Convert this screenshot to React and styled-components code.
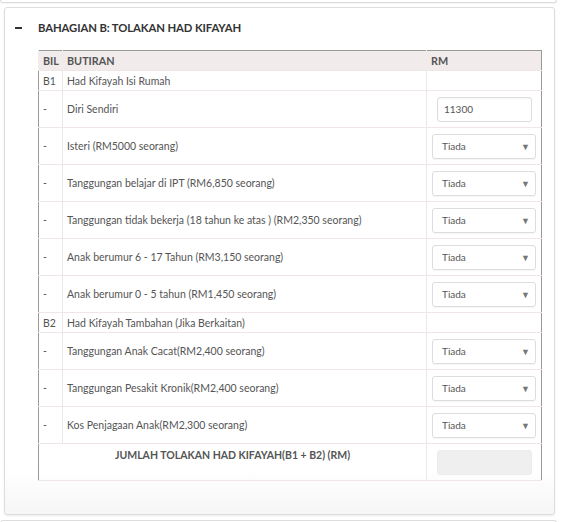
import React from "react";
import styled, { createGlobalStyle } from "styled-components";

const Global = createGlobalStyle`
  html, body { margin: 0; padding: 0; background: #fff; }
  body { font-family: Lato, "Open Sans", sans-serif; color: #555; }
  * { box-sizing: border-box; }
`;

const Page = styled.div`
  width: 563px;
  height: 522px;
  overflow: hidden;
  display: flex;
  flex-direction: column;
`;

const PrevPanel = styled.div`
  height: 3px;
  width: 557px;
  border: 1px solid #ddd;
  border-top: none;
  border-radius: 0 0 3px 3px;
  box-shadow: 0 1px 1px rgba(0,0,0,0.05);
  flex: none;
`;

const Panel = styled.section`
  margin: 4px 8px 0 4px;
  height: 508px;
  border: 1px solid #ddd;
  border-radius: 3px;
  background: linear-gradient(to bottom, #fff 0%, #fff 91%, #f6f6f6 100%);
  box-shadow: 0 1px 2px rgba(0,0,0,0.08);
  flex: none;
  display: flex;
  flex-direction: column;
`;

const NextPanel = styled.div`
  margin-top: 5px;
  height: 4px;
  width: 557px;
  border: 1px solid #ddd;
  border-bottom: none;
  border-radius: 3px 3px 0 0;
  flex: none;
`;

const Header = styled.div`
  display: flex;
  align-items: center;
  height: 36px;
  padding: 3px 0 0 10px;
  gap: 16px;
`;

const Toggle = styled.span`
  width: 7px;
  height: 2px;
  background: #333;
`;

const Title = styled.h3`
  margin: 0;
  font-size: 11.3px;
  font-weight: 700;
  color: #333;
  letter-spacing: -0.1px;
`;

const Body = styled.div`
  padding: 6px 0 0 33px;
`;

const Table = styled.table`
  width: 503px;
  border-collapse: collapse;
  border: 1px solid #999;
  table-layout: fixed;
  font-size: 10.5px;
  color: #555;
`;

const Th = styled.th`
  background: #f1ebeb;
  font-weight: 700;
  text-align: left;
  height: 20px;
  padding: 0 4px;
  border-left: 1px solid #f1ebeb;
  font-size: 10.8px;
  color: #555;
`;

const Td = styled.td`
  border: 1px solid #efe7e7;
  padding: 0 4px;
  height: ${p => (p.$tall ? "37px" : "20px")};
  vertical-align: ${p => (p.$top ? "top" : "middle")};
  text-align: ${p => (p.$center ? "center" : "left")};
  font-weight: ${p => (p.$bold ? 700 : 400)};
  padding-top: ${p => (p.$top ? "5px" : "0")};
  &:first-child { border-left: none; }
  &:last-child { border-right: none; }
`;

const ValueCell = styled.td`
  border: 1px solid #efe7e7;
  border-right: none;
  padding: 0 5px 0 5px;
  height: ${p => (p.$tall ? "37px" : "20px")};
`;

const TextInput = styled.div`
  height: 25px;
  width: 95px;
  margin-left: 5px;
  border: 1px solid #ddd;
  border-radius: 3px;
  font-size: 10px;
  color: #555;
  display: flex;
  align-items: center;
  padding-left: 6px;
  box-shadow: inset 0 1px 1px rgba(0,0,0,0.04);
`;

const TotalBox = styled.div`
  height: 25px;
  width: 95px;
  margin-left: 5px;
  border-radius: 3px;
  background: #efefef;
  border: 1px solid #ececec;
`;

const Select = styled.div`
  height: 25px;
  width: 104px;
  border: 1px solid #ddd;
  border-radius: 3px;
  font-size: 10px;
  color: #555;
  display: flex;
  align-items: center;
  justify-content: space-between;
  padding: 0 5px 0 9px;
  box-shadow: 0 1px 1px rgba(0,0,0,0.04);
`;

const Caret = styled.span`
  font-size: 9px;
  color: #777;
`;

const rowsB1 = [
  "Isteri (RM5000 seorang)",
  "Tanggungan belajar di IPT (RM6,850 seorang)",
  "Tanggungan tidak bekerja (18 tahun ke atas ) (RM2,350 seorang)",
  "Anak berumur 6 - 17 Tahun (RM3,150 seorang)",
  "Anak berumur 0 - 5 tahun (RM1,450 seorang)",
];

const rowsB2 = [
  "Tanggungan Anak Cacat(RM2,400 seorang)",
  "Tanggungan Pesakit Kronik(RM2,400 seorang)",
  "Kos Penjagaan Anak(RM2,300 seorang)",
];

function SelectRow({ label }) {
  return (
    <tr>
      <Td $tall>-</Td>
      <Td $tall>{label}</Td>
      <ValueCell $tall>
        <Select>
          <span>Tiada</span>
          <Caret>▼</Caret>
        </Select>
      </ValueCell>
    </tr>
  );
}

export default function App() {
  return (
    <Page>
      <Global />
      <PrevPanel />
      <Panel>
        <Header>
          <Toggle />
          <Title>BAHAGIAN B: TOLAKAN HAD KIFAYAH</Title>
        </Header>
        <Body>
          <Table>
            <colgroup>
              <col style={{ width: 24 }} />
              <col style={{ width: 364 }} />
              <col style={{ width: 115 }} />
            </colgroup>
            <thead>
              <tr>
                <Th>BIL</Th>
                <Th>BUTIRAN</Th>
                <Th>RM</Th>
              </tr>
            </thead>
            <tbody>
              <tr>
                <Td>B1</Td>
                <Td>Had Kifayah Isi Rumah</Td>
                <ValueCell />
              </tr>
              <tr>
                <Td $tall>-</Td>
                <Td $tall>Diri Sendiri</Td>
                <ValueCell $tall>
                  <TextInput>11300</TextInput>
                </ValueCell>
              </tr>
              {rowsB1.map(r => (
                <SelectRow key={r} label={r} />
              ))}
              <tr>
                <Td>B2</Td>
                <Td>Had Kifayah Tambahan (Jika Berkaitan)</Td>
                <ValueCell />
              </tr>
              {rowsB2.map(r => (
                <SelectRow key={r} label={r} />
              ))}
              <tr>
                <Td $tall colSpan={2} $center $bold $top>
                  JUMLAH TOLAKAN HAD KIFAYAH(B1 + B2) (RM)
                </Td>
                <ValueCell $tall>
                  <TotalBox />
                </ValueCell>
              </tr>
            </tbody>
          </Table>
        </Body>
      </Panel>
      <NextPanel />
    </Page>
  );
}
